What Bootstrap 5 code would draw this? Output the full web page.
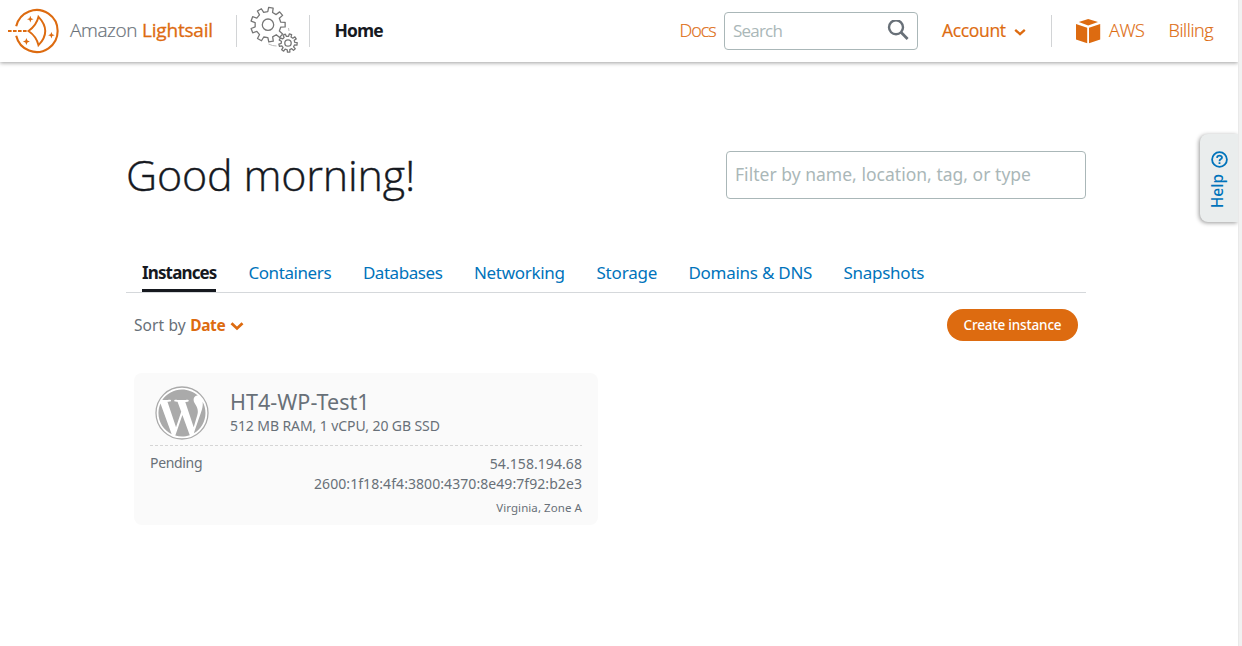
<!DOCTYPE html>
<html lang="en">
<head>
<meta charset="utf-8">
<title>Amazon Lightsail</title>
<link href="https://cdn.jsdelivr.net/npm/bootstrap@5.3.0/dist/css/bootstrap.min.css" rel="stylesheet">
<style>
:root{--orange:#dd6b10;--blue:#0073bb;--slate:#687078;--ink:#16191f}
body{font-family:"Noto Sans","Open Sans",sans-serif;height:646px;overflow:hidden;background:#fff;color:var(--slate)}
a{text-decoration:none}
svg{flex:none;display:block}
.page-area{width:1238px}
.gutter-strip{width:4px;background:#f1f1f1;box-shadow:inset 1px 0 #e9e9e9;position:relative}
.topbar{font-family:"Open Sans",sans-serif;height:62px;padding:0;box-shadow:0 1px 4px rgba(0,0,0,.38);flex-wrap:nowrap;justify-content:flex-start;line-height:24px;background:#fff}
.topbar a{color:var(--orange);white-space:nowrap;flex:none;padding-bottom:2px}
.brand-text{width:166px;margin-left:10px;font-size:19px}
.brand-text .thin{color:var(--slate);font-weight:300;letter-spacing:-.4px;-webkit-text-stroke:.2px}
.brand-text .strong{font-weight:500;letter-spacing:-.2px;margin-left:5px;-webkit-text-stroke:.3px}
.rule{width:1px;height:32px;background:#d2d4d6;flex:none}
.topbar .home{color:var(--ink);font-weight:700;font-size:17.5px;letter-spacing:-.9px;margin-left:24.5px;width:345px}
.light-link{font-weight:300;font-size:18px;-webkit-text-stroke:.2px}
.docs{letter-spacing:-1.05px;width:44.5px}
.search-box{width:194px;height:38px;border:1px solid #aab7b8;border-radius:4px;padding:0 8px;flex:none;color:#aab7b8;font-size:17px;letter-spacing:-.8px}
.account{font-weight:500;font-size:17.5px;letter-spacing:-.33px;margin-left:24px;width:72px;-webkit-text-stroke:.2px}
.greeting{font-family:"Open Sans",sans-serif;font-weight:300;font-size:43px;line-height:50px;letter-spacing:-.18px;color:var(--ink);position:relative;-webkit-text-stroke:.4px}
.content{width:960px;margin-left:126px;padding-top:88px}
.filter-box{width:360px;height:48px;border:1px solid #aab7b8;border-radius:4px;padding:0 8px 1px;font-size:17.5px;letter-spacing:.02px;color:#aab7b8}
.tab-row{height:42px;margin-top:51px;padding-left:16px;gap:32px;border-bottom:1px solid #d5d8db;flex-wrap:nowrap;font-size:17px;line-height:24px}
.tab-row a{color:var(--blue);padding:10px 0 0;height:41px;white-space:nowrap;letter-spacing:var(--ls)}
.tab-row a.active{color:var(--ink);font-weight:700;border-bottom:3px solid var(--ink)}
.t1{width:74.4px;--ls:-.86px}.t2{width:82.5px;--ls:-.41px}.t3{width:79px;--ls:-.45px}.t4{width:90.5px;--ls:-.3px}.t5{width:60px;--ls:-.17px}.t6{width:123px;--ls:-.26px}.t7{width:81px;--ls:-.25px}
.sort{font-size:15.5px;line-height:22px;letter-spacing:.1px}
.sort b{color:var(--orange);letter-spacing:-.4px;margin-left:4.5px}
.create,.create:hover{width:131px;height:32px;border-radius:16px;background:var(--orange);color:#fff;font-weight:500;font-size:13.5px;letter-spacing:-.16px;padding:0;border:0;line-height:31px}
.instance{width:464px;height:152px;margin:32px 0 0 8px;background:#fafafa;border:0;border-radius:8px;padding:13px 16px 0;color:var(--slate)}
.instance>*{flex:none}
.instance .title{font-size:21.5px;line-height:26px;letter-spacing:.05px}
.instance .spec{font-size:14px;line-height:20px;letter-spacing:-.09px}
.dash-line{height:1px;margin-top:5px;background:repeating-linear-gradient(90deg,#d5d5d5 0 3px,transparent 3px 5px)}
.ip-list{font-size:14px;line-height:20px;letter-spacing:.07px;padding-top:1px}
.zone{font-size:11.5px;line-height:18px;letter-spacing:.07px}
.help-tab{position:absolute;left:1200px;top:134px;width:38px;height:88px;background:#eaeded;border-radius:8px 0 0 8px;box-shadow:-1px 1px 4px rgba(0,0,0,.4);clip-path:inset(-8px 0 -8px -8px);color:var(--blue)}
.help-text{writing-mode:vertical-rl;transform:rotate(180deg);font-weight:500;font-size:15.5px;line-height:20px;margin-right:4px}
</style>
<script src="https://cdn.jsdelivr.net/npm/bootstrap@5.3.0/dist/js/bootstrap.bundle.min.js"></script>
</head>
<body class="d-flex">
<div class="page-area">
<nav class="topbar navbar d-flex align-items-center">
  <svg width="60" height="62" viewBox="0 0 60 62" fill="none" stroke="#dd6b10">
    <path d="M16.2 26.2A21 21 0 1 1 16.2 35.8" stroke-width="2.1"/>
    <path d="M8 31H29" stroke-width="1.8" stroke-dasharray="3.6 1.4"/>
    <path d="M38.5 16.8Q36.5 25.5 28.5 31Q36.5 36.5 38.5 45.2Q52 31 38.5 16.8Z" stroke-width="1.9"/>
    <g fill="#dd6b10" stroke="none"><path d="M30.3 15.8l.9 2.5 2.4.9-2.4.9-.9 2.5-.9-2.5-2.4-.9 2.4-.9zM26.4 38l1 2.6 2.5.9-2.5.9-1 2.6-1-2.6-2.5-.9 2.5-.9zM51.4 32l.9 2.3 2.4.9-2.4.9-.9 2.3-.9-2.3-2.4-.9 2.4-.9z"/></g>
  </svg>
  <a class="brand-text" href="#"><span class="thin">Amazon</span><span class="strong">Lightsail</span></a>
  <div class="rule"></div>
  <svg width="72" height="62" viewBox="237 0 72 62" fill="none" stroke="#777" stroke-width="1.3" stroke-linejoin="round">
    <path id="gearLarge"/><circle cx="268" cy="24.7" r="5.7"/>
    <path id="gearSmall"/><circle cx="288" cy="43" r="3.2"/>
    <path d="M268.5 44q4 2 8 2M288.5 28l.5 3" stroke="#bbb" stroke-width="1"/>
  </svg>
  <div class="rule"></div>
  <a class="home" href="#">Home</a>
  <a class="light-link docs" href="#">Docs</a>
  <div class="search-box d-flex align-items-center justify-content-between"><span>Search</span>
    <svg width="22" height="22" viewBox="0 0 22 22" fill="none" stroke="#687078" stroke-width="2.4"><circle cx="9" cy="7.3" r="7"/><path d="M14 12.3l6.6 6.6" stroke-width="2.8"/></svg>
  </div>
  <a class="account" href="#">Account</a>
  <svg width="12" height="10" viewBox="0 0 12 10" fill="none" stroke="#dd6b10" stroke-width="2.3"><path d="M1.2 3.8L6 8.2l4.8-4.4"/></svg>
  <div class="rule" style="margin-left:25px"></div>
  <a class="light-link d-flex align-items-center" style="margin-left:24px;width:92.5px;letter-spacing:-.4px" href="#">
    <svg class="me-2 mt-1" width="25" height="26" viewBox="0 0 25 26" fill="#dd6b10"><path d="M12.2 0l9.8 3-9.8 3.5L2.8 3zM0 5l11.2 3.8v15.4L0 20.4zM24.2 5L13 8.8v15.4l11.2-3.8z"/></svg>AWS</a>
  <a class="light-link" style="letter-spacing:-.4px" href="#">Billing</a>
</nav>
<main class="content">
  <div class="d-flex justify-content-between align-items-center">
    <h1 class="greeting m-0">Good morning!</h1>
    <div class="filter-box d-flex align-items-center">Filter by name, location, tag, or type</div>
  </div>
  <nav class="nav tab-row">
    <a class="active t1" href="#">Instances</a><a class="t2" href="#">Containers</a><a class="t3" href="#">Databases</a><a class="t4" href="#">Networking</a><a class="t5" href="#">Storage</a><a class="t6" href="#">Domains &amp; DNS</a><a class="t7" href="#">Snapshots</a>
  </nav>
  <div class="d-flex justify-content-between align-items-center px-2 mt-3">
    <div class="sort d-flex align-items-center"><span>Sort by</span><b>Date</b>
      <svg style="margin:2px 0 0 5px" width="14" height="10" viewBox="0 0 14 10" fill="none" stroke="#dd6b10" stroke-width="2.8"><path d="M1.5 2.2L7 7.4l5.5-5.2"/></svg></div>
    <button class="btn create">Create instance</button>
  </div>
  <article class="card instance">
    <div class="d-flex">
      <svg style="margin-left:5px" width="54" height="54" viewBox="0 0 54 54"><circle cx="27" cy="27" r="26" fill="#fff" stroke="#aaa" stroke-width="1.3"/><g transform="translate(.8 .8) scale(2.18)" fill="#aaa"><path d="M21.469 6.825c.84 1.537 1.318 3.3 1.318 5.175 0 3.979-2.156 7.456-5.363 9.325l3.295-9.527c.615-1.54.82-2.771.82-3.864 0-.405-.026-.78-.07-1.11m-7.981.105c.647-.03 1.232-.105 1.232-.105.582-.075.514-.93-.067-.899 0 0-1.755.135-2.88.135-1.064 0-2.85-.15-2.85-.15-.585-.03-.661.855-.075.885 0 0 .54.061 1.125.09l1.68 4.605-2.37 7.08L5.354 6.9c.649-.03 1.234-.1 1.234-.1.585-.075.516-.93-.065-.896 0 0-1.746.138-2.874.138-.2 0-.438-.008-.69-.015C4.911 3.15 8.235 1.215 12 1.215c2.809 0 5.365 1.072 7.286 2.833-.046-.003-.091-.009-.141-.009-1.06 0-1.812.923-1.812 1.914 0 .89.513 1.643 1.06 2.531.411.72.89 1.643.89 2.977 0 .915-.354 1.994-.821 3.479l-1.075 3.585-3.9-11.61zM12 22.784c-1.059 0-2.081-.153-3.048-.437l3.237-9.406 3.315 9.087c.024.053.05.101.078.149-1.12.393-2.325.609-3.582.609M1.211 12c0-1.564.336-3.05.935-4.39L7.29 21.709C3.694 19.96 1.212 16.271 1.211 12"/></g></svg>
      <div style="margin-left:21px;padding-top:3px"><div class="title">HT4-WP-Test1</div><div class="spec" style="padding-top:1px">512 MB RAM, 1 vCPU, 20 GB SSD</div></div>
    </div>
    <div class="dash-line"></div>
    <div class="d-flex justify-content-between" style="padding-top:7px">
      <div class="spec" style="letter-spacing:-.33px">Pending</div>
      <div class="text-end"><div class="ip-list">54.158.194.68<br>2600:1f18:4f4:3800:4370:8e49:7f92:b2e3</div><div class="zone" style="margin-top:5px">Virginia, Zone A</div></div>
    </div>
  </article>
</main>
<aside class="help-tab d-flex flex-column align-items-center" style="padding-top:17px">
  <svg width="17" height="17" viewBox="0 0 17 17" fill="none" stroke="#0073bb" stroke-width="1.8"><circle cx="8.5" cy="8.5" r="7.4"/><path d="M6 6.8Q6.2 4.6 8.5 4.6T11 6.6Q11 7.6 9.6 8.3Q8.5 8.9 8.5 10.2M8.5 11.2V13"/></svg>
  <span class="help-text" style="margin-top:6px">Help</span>
</aside>
</div>
<div class="gutter-strip"></div>
<script>
// Outline of a cog with trapezoid teeth
function gear(id, cx, cy, outer, inner, teeth, turn) {
  const pts = [];
  for (let i = 0; i < teeth; i++)
    for (const [f, r] of [[-.27, inner], [-.19, outer], [.19, outer], [.27, inner]]) {
      const a = (i + f) * 2 * Math.PI / teeth + turn;
      pts.push((cx + r * Math.cos(a)).toFixed(2) + ' ' + (cy + r * Math.sin(a)).toFixed(2));
    }
  document.getElementById(id).setAttribute('d', 'M' + pts.join('L') + 'Z');
}
gear('gearLarge', 268, 24.7, 17.3, 13, 9, -1.4);
gear('gearSmall', 288, 43, 9.2, 6.8, 9, 0.1);
</script>
</body>
</html>
